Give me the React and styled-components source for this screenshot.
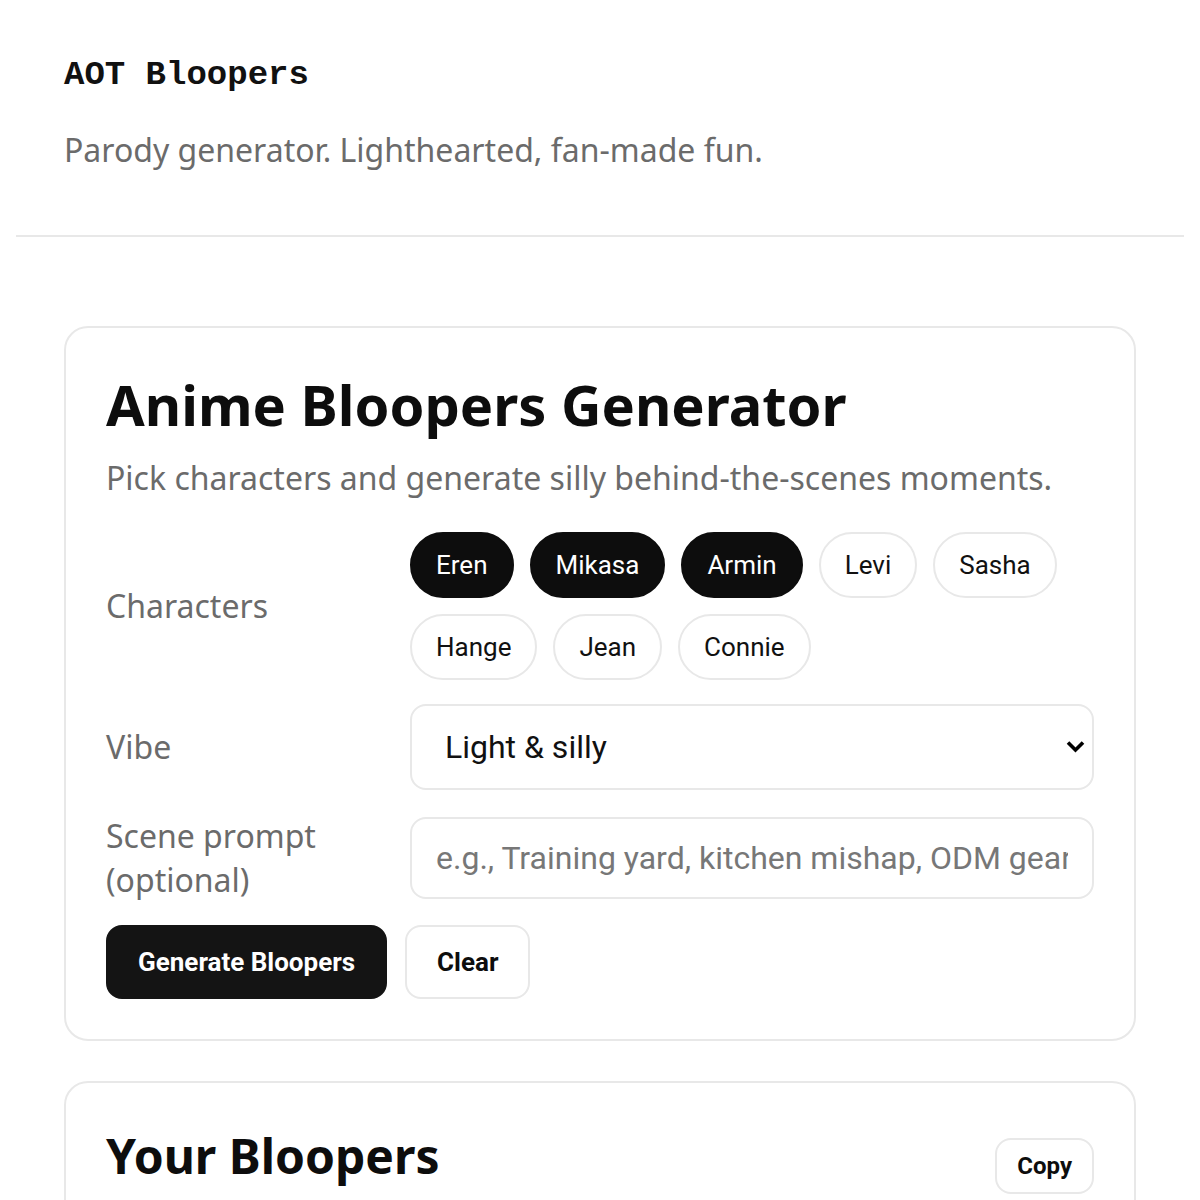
import React, { useState } from "react";
import styled, { createGlobalStyle } from "styled-components";

const Global = createGlobalStyle`
  * { box-sizing: border-box; }
  html, body { margin: 0; padding: 0; background: #ffffff; }
  body { font-family: "Noto Sans", "Open Sans", sans-serif; color: #111; }
`;

const Page = styled.div`
  padding: 0 16px;
`;

const Header = styled.header`
  padding: 55px 48px 63px;
  border-bottom: 2px solid #e8e8e8;
`;

const Brand = styled.h1`
  margin: 0;
  font-family: Courier, "Nimbus Mono PS", "FreeMono", "Liberation Mono", monospace;
  font-weight: 700;
  font-size: 34px;
  line-height: 41px;
  color: #111;
`;

const Tagline = styled.p`
  margin: 31px 0 0;
  font-family: "Noto Sans", sans-serif;
  font-size: 32px;
  line-height: 45px;
  color: #6b6b6b;
`;

const Main = styled.main`
  padding: 89px 48px 40px;
  display: flex;
  flex-direction: column;
  gap: 40px;
`;

const Card = styled.section`
  border: 2px solid #e8e8e8;
  border-radius: 24px;
  background: #fff;
  padding: 40px;
`;

const CardTitle = styled.h2`
  margin: 0;
  font-family: "Noto Sans", sans-serif;
  font-weight: 700;
  font-size: ${(p) => p.$size || 56}px;
  line-height: ${(p) => p.$lh || 1.3};
  color: #0d0d0d;
`;

const CardSub = styled.p`
  margin: 14px 0 0;
  font-size: 32px;
  line-height: 45px;
  color: #6b6b6b;
`;

const Form = styled.div`
  margin-top: 32px;
  display: grid;
  grid-template-columns: 280px 1fr;
  column-gap: 24px;
  row-gap: 24px;
  align-items: center;
`;

const Label = styled.label`
  font-family: "Noto Sans", sans-serif;
  font-size: 32px;
  line-height: 44px;
  color: #6b6b6b;
`;

const Chips = styled.div`
  display: flex;
  flex-wrap: wrap;
  gap: 16px;
`;

const Chip = styled.button`
  font-family: Roboto, sans-serif;
  font-size: 26px;
  line-height: 30px;
  padding: 16px 24px;
  border-radius: 999px;
  border: 2px solid ${(p) => (p.$on ? "#0d0d0d" : "#e8e8e8")};
  background: ${(p) => (p.$on ? "#0d0d0d" : "#fff")};
  color: ${(p) => (p.$on ? "#fff" : "#111")};
  cursor: pointer;
`;

const SelectWrap = styled.div`
  position: relative;
`;

const Select = styled.select`
  appearance: none;
  -webkit-appearance: none;
  width: 100%;
  height: 86px;
  border: 2px solid #e8e8e8;
  border-radius: 16px;
  background: #fff;
  padding: 0 60px 0 33px;
  font-family: Roboto, sans-serif;
  font-size: 32px;
  color: #111;
  outline: none;
`;

const Chevron = styled.svg`
  position: absolute;
  right: 9px;
  top: 50%;
  width: 19px;
  height: 13px;
  margin-top: -7px;
  pointer-events: none;
`;

const Input = styled.input`
  width: 100%;
  height: 82px;
  border: 2px solid #e8e8e8;
  border-radius: 16px;
  background: #fff;
  padding: 0 24px;
  font-family: Roboto, sans-serif;
  font-size: 32px;
  color: #111;
  outline: none;
  &::placeholder { color: #777777; }
`;

const Actions = styled.div`
  margin-top: 23px;
  display: flex;
  gap: 18px;
`;

const Button = styled.button`
  font-family: Roboto, sans-serif;
  font-weight: 700;
  font-size: ${(p) => (p.$small ? 24 : 26)}px;
  height: ${(p) => (p.$small ? 56 : 74)}px;
  padding: 0 ${(p) => (p.$small ? 20 : 30)}px;
  border-radius: 16px;
  border: 2px solid ${(p) => (p.$primary ? "#141414" : "#e8e8e8")};
  background: ${(p) => (p.$primary ? "#141414" : "#fff")};
  color: ${(p) => (p.$primary ? "#fff" : "#0d0d0d")};
  cursor: pointer;
`;

const CardHead = styled.div`
  display: flex;
  justify-content: space-between;
  align-items: flex-start;
`;

const CopyButton = styled(Button)`
  margin-top: 15px;
`;

const CHARS = ["Eren", "Mikasa", "Armin", "Levi", "Sasha", "Hange", "Jean", "Connie"];

export default function App() {
  const [sel, setSel] = useState(["Eren", "Mikasa", "Armin"]);
  const toggle = (c) =>
    setSel((s) => (s.includes(c) ? s.filter((x) => x !== c) : [...s, c]));
  return (
    <Page>
      <Global />
      <Header>
        <Brand>AOT Bloopers</Brand>
        <Tagline>Parody generator. Lighthearted, fan-made fun.</Tagline>
      </Header>
      <Main>
        <Card>
          <CardTitle>Anime Bloopers Generator</CardTitle>
          <CardSub>Pick characters and generate silly behind-the-scenes moments.</CardSub>
          <Form>
            <Label>Characters</Label>
            <Chips>
              {CHARS.map((c) => (
                <Chip key={c} $on={sel.includes(c)} onClick={() => toggle(c)}>
                  {c}
                </Chip>
              ))}
            </Chips>
            <Label>Vibe</Label>
            <SelectWrap>
              <Select defaultValue="light">
                <option value="light">Light &amp; silly</option>
                <option value="chaotic">Chaotic</option>
                <option value="wholesome">Wholesome</option>
              </Select>
              <Chevron viewBox="0 0 19 13">
                <path d="M2 2.5 L9.5 10 L17 2.5" fill="none" stroke="#000" strokeWidth="3.6" />
              </Chevron>
            </SelectWrap>
            <Label>
              Scene prompt
              <br />
              (optional)
            </Label>
            <Input placeholder="e.g., Training yard, kitchen mishap, ODM gear" />
          </Form>
          <Actions>
            <Button $primary>Generate Bloopers</Button>
            <Button>Clear</Button>
          </Actions>
        </Card>
        <Card>
          <CardHead>
            <CardTitle $size={48} $lh={1.36}>Your Bloopers</CardTitle>
            <CopyButton $small>Copy</CopyButton>
          </CardHead>
        </Card>
      </Main>
    </Page>
  );
}
